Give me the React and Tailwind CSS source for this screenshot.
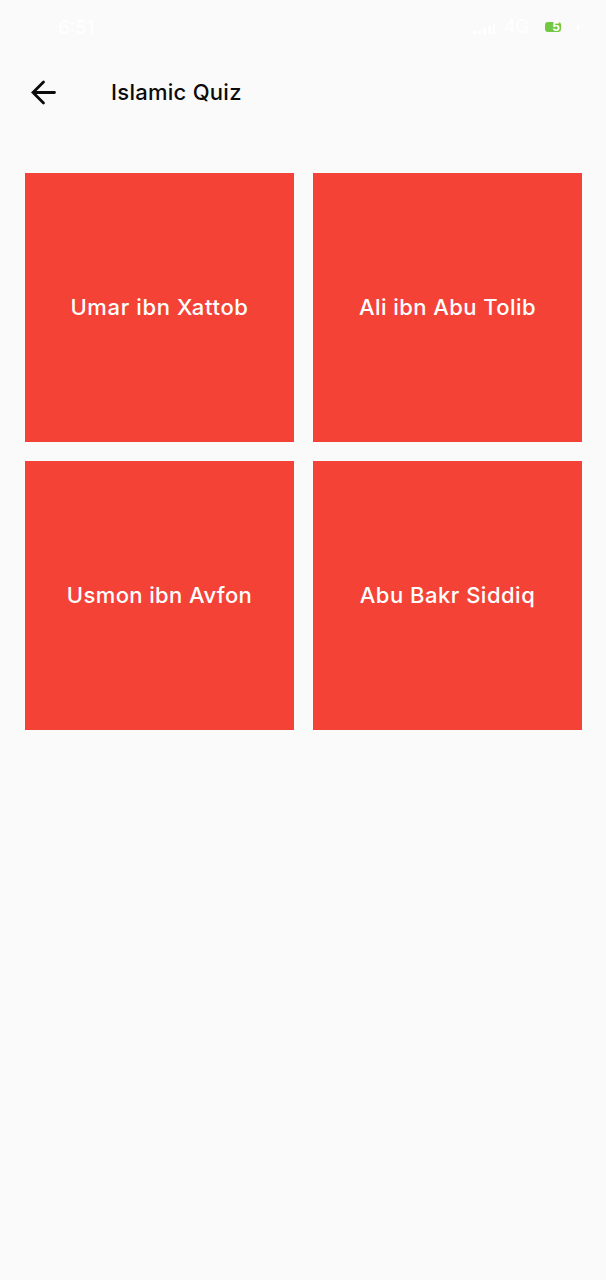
const quizzes = [
  { name: "Umar ibn Xattob", spacing: "tracking-[0.63px]" },
  { name: "Ali ibn Abu Tolib", spacing: "tracking-[0.42px]" },
  { name: "Usmon ibn Avfon", spacing: "tracking-[0.38px]" },
  { name: "Abu Bakr Siddiq", spacing: "tracking-[0.5px]" },
];

function StatusBar() {
  return (
    <div className="flex h-[54px] items-center pl-[58px] pr-[27px] text-white">
      <span className="text-[19px] leading-none">6:51</span>
      <div className="ml-auto flex items-center">
        <svg width="24" height="16" viewBox="0 0 24 16" fill="currentColor">
          <path d="M1 12h3v3H1zM6 11h3v4H6zM11 9h3v6h-3zM16 7h3v8h-3zM21 5h2v10h-2z" />
        </svg>
        <span className="ml-2 mr-4 text-[18px] leading-none">4G</span>
        <div className="flex h-[10px] w-4 items-center justify-end rounded-[3px] bg-[#72c93f] pr-px text-[12px] font-bold leading-none">5</div>
        <div className="ml-4 h-1 w-0.5 bg-white" />
      </div>
    </div>
  );
}

export default function App() {
  return (
    <div className="min-h-screen w-full bg-[#fafafa] font-['Inter',sans-serif]">
      <StatusBar />
      <header className="flex h-[76px] items-center pl-[30px]">
        <svg width="27" height="26" viewBox="0 0 27 26" fill="none" stroke="#0b0b0b" strokeWidth="2.8" strokeLinecap="round">
          <path d="M24.5 13.5H3M13.5 3L3 13.5L13.5 24" />
        </svg>
        <h1 className="ml-[54px] text-[22px] font-medium leading-none tracking-[0.27px] text-[#0b0b0b]">Islamic Quiz</h1>
      </header>
      <main className="grid grid-cols-[269px_269px] gap-[19px] pl-[25px] pt-[43px]">
        {quizzes.map(({ name, spacing }) => (
          <button key={name} className="flex h-[269px] items-center justify-center bg-[#f44336] pb-0.5 text-white">
            <span className={`whitespace-nowrap text-[22px] font-medium leading-none ${spacing}`}>{name}</span>
          </button>
        ))}
      </main>
    </div>
  );
}
